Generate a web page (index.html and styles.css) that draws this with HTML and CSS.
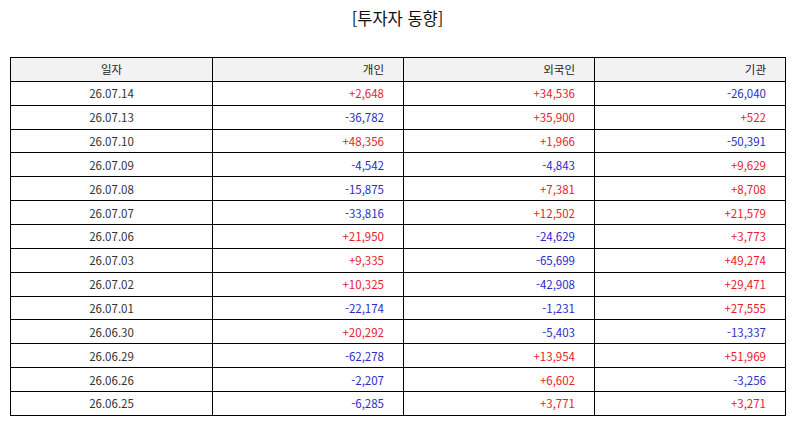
FILE: index.html
```html
<!DOCTYPE html>
<html lang="ko">
<head>
<meta charset="utf-8">
<title>투자자 동향</title>
<link rel="stylesheet" href="styles.css">
</head>
<body>
<div class="page">
  <h1 class="title">[투자자 동향]</h1>
  <table class="grid">
    <colgroup>
      <col class="c-date"><col class="c-num"><col class="c-num"><col class="c-num">
    </colgroup>
    <thead>
      <tr><th class="center">일자</th><th>개인</th><th>외국인</th><th>기관</th></tr>
    </thead>
    <tbody>
      <tr><td class="center">26.07.14</td><td class="up">+2,648</td><td class="up">+34,536</td><td class="down">-26,040</td></tr>
      <tr><td class="center">26.07.13</td><td class="down">-36,782</td><td class="up">+35,900</td><td class="up">+522</td></tr>
      <tr><td class="center">26.07.10</td><td class="up">+48,356</td><td class="up">+1,966</td><td class="down">-50,391</td></tr>
      <tr><td class="center">26.07.09</td><td class="down">-4,542</td><td class="down">-4,843</td><td class="up">+9,629</td></tr>
      <tr><td class="center">26.07.08</td><td class="down">-15,875</td><td class="up">+7,381</td><td class="up">+8,708</td></tr>
      <tr><td class="center">26.07.07</td><td class="down">-33,816</td><td class="up">+12,502</td><td class="up">+21,579</td></tr>
      <tr><td class="center">26.07.06</td><td class="up">+21,950</td><td class="down">-24,629</td><td class="up">+3,773</td></tr>
      <tr><td class="center">26.07.03</td><td class="up">+9,335</td><td class="down">-65,699</td><td class="up">+49,274</td></tr>
      <tr><td class="center">26.07.02</td><td class="up">+10,325</td><td class="down">-42,908</td><td class="up">+29,471</td></tr>
      <tr><td class="center">26.07.01</td><td class="down">-22,174</td><td class="down">-1,231</td><td class="up">+27,555</td></tr>
      <tr><td class="center">26.06.30</td><td class="up">+20,292</td><td class="down">-5,403</td><td class="down">-13,337</td></tr>
      <tr><td class="center">26.06.29</td><td class="down">-62,278</td><td class="up">+13,954</td><td class="up">+51,969</td></tr>
      <tr><td class="center">26.06.26</td><td class="down">-2,207</td><td class="up">+6,602</td><td class="down">-3,256</td></tr>
      <tr><td class="center">26.06.25</td><td class="down">-6,285</td><td class="up">+3,771</td><td class="up">+3,271</td></tr>
    </tbody>
  </table>
</div>
</body>
</html>
```

FILE: styles.css
```css
html, body {
  margin: 0;
  padding: 0;
  background: #ffffff;
}

.page {
  padding: 0 9px 0 10px;
  font-family: "Noto Sans CJK KR", "Noto Sans", sans-serif;
  color: #333333;
}

.title {
  margin: 0;
  height: 57px;
  padding-top: 6px;
  box-sizing: border-box;
  font-size: 16.5px;
  font-weight: normal;
  line-height: 24px;
  text-align: center;
  color: #111111;
}

.grid {
  width: 775px;
  border-collapse: collapse;
  table-layout: fixed;
  font-size: 11.5px;
}

.c-date { width: 202px; }
.c-num { width: 191px; }

.grid tr {
  height: 23.87px;
}

.grid th,
.grid td {
  border: 1px solid #000000;
  padding: 0 19px 0 8px;
  text-align: right;
  font-weight: normal;
  line-height: 14px;
  white-space: nowrap;
}

.grid th {
  background: #f2f2f2;
  color: #222222;
}

.grid .center {
  text-align: center;
  padding: 0;
}

.up { color: #e8202a; }
.down { color: #2b2bc8; }
```
